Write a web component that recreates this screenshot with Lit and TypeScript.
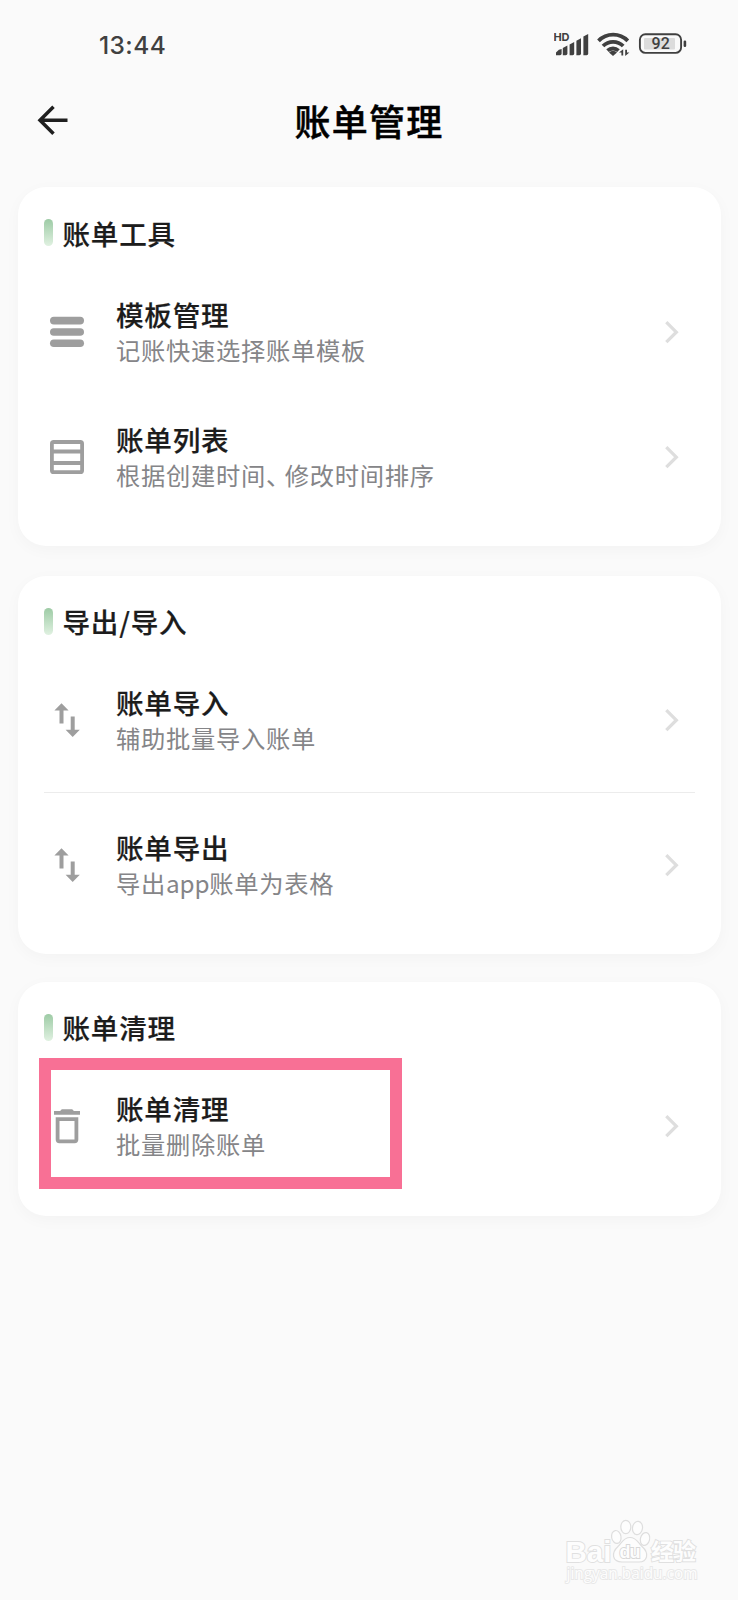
import { LitElement, html, css, svg, nothing } from "lit";
import { customElement, property } from "lit/decorators.js";

type IconName = "menu" | "list" | "swap" | "trash";

interface Row {
  icon: IconName;
  title: string;
  note: string;
  marked?: boolean;
}

interface Section {
  title: string;
  rows: Row[];
  divided?: boolean;
}

const SECTIONS: Section[] = [
  {
    title: "账单工具",
    rows: [
      { icon: "menu", title: "模板管理", note: "记账快速选择账单模板" },
      { icon: "list", title: "账单列表", note: "根据创建时间、修改时间排序" },
    ],
  },
  {
    title: "导出/导入",
    divided: true,
    rows: [
      { icon: "swap", title: "账单导入", note: "辅助批量导入账单" },
      { icon: "swap", title: "账单导出", note: "导出app账单为表格" },
    ],
  },
  {
    title: "账单清理",
    rows: [{ icon: "trash", title: "账单清理", note: "批量删除账单", marked: true }],
  },
];

const ICONS = {
  menu: svg`<g fill="#9e9e9e"><rect x="3" y="4.7" width="34" height="7.8" rx="3.9"/><rect x="3" y="16.2" width="34" height="7.6" rx="3.8"/><rect x="3" y="27.5" width="34" height="7.6" rx="3.8"/></g>`,
  list: svg`<g fill="none" stroke="#9e9e9e" stroke-width="3.8"><rect x="4.9" y="5" width="30.2" height="30.2" rx="1.8"/><path d="M5 14.5h30M5 26h30"/></g>`,
  swap: svg`<path fill="#9e9e9e" d="M14.5 3.2 21.6 10.4H16.5V23.6H12.5V10.4H7.4ZM25.7 37 18.6 29.8H23.7V16.6H27.7V29.8H32.8Z"/>`,
  trash: svg`<path fill="#9e9e9e" fill-rule="evenodd" d="M14.8 3.3h10.4l1.7 1.7H33V8.7H7V5h6.1zM8.7 11.3H31.3V33.5a3.7 3.7 0 0 1-3.7 3.7H12.4a3.7 3.7 0 0 1-3.7-3.7zM12.5 14.9V33.5h15V14.9z"/>`,
};

@customElement("status-bar")
class StatusBar extends LitElement {
  static styles = css`
    :host {
      display: flex;
      justify-content: space-between;
      align-items: center;
      height: 88px;
      padding: 1px 50px 0 99px;
      box-sizing: border-box;
      color: #404040;
    }
    .time {
      font: 500 24.5px/30px Inter, "Noto Sans", sans-serif;
      letter-spacing: 0.4px;
    }
    .hd {
      font: 700 11px Inter, "Noto Sans", sans-serif;
    }
    .level {
      font: 500 16px Roboto, "Noto Sans", sans-serif;
    }
  `;
  render() {
    return html`
      <span class="time">13:44</span>
      <svg width="134" height="30" viewBox="0 0 134 30" fill="#404040">
        <text class="hd" x="-0.6" y="11.4" textLength="16">HD</text>
        <path d="M2 25.2v-2.8q3-3.400 5.600-3.400v4.600q0 1.600-1.600 1.600z"/>
        <path d="M8.800 25.200v-7.200l4.600-2.500v8.100q0 1.600-1.600 1.600z"/>
        <path d="M15.600 25.200v-10.700l4.600-2.500v11.600q0 1.600-1.600 1.600z"/>
        <path d="M22.400 25.200v-14.400l4.600-2.500v15.300q0 1.600-1.600 1.600z"/>
        <path d="M29.400 25.200v-18.700l4.800-2.500v19.600q0 1.600-1.600 1.600z"/>
        <g fill="none" stroke="#404040" stroke-width="3.800">
          <path d="M44.500 10.800a20.500 20.500 0 0 1 29.300 0"/>
          <path d="M49 16a14.300 14.300 0 0 1 20.200 0"/>
          <path d="M53.500 20.600a8.300 8.300 0 0 1 11 0"/>
        </g>
        <path d="M59 20.700q2.300 0 4 1.700l-4 3.600-4-3.600q1.700-1.700 4-1.700z"/>
        <path d="M69.200 19.200v6.200h-1.800v-2.800h-2.400zM71.200 26v-6.200h1.800v2.800h2.400z"/>
        <rect x="85.900" y="4.300" width="41.200" height="18.600" rx="5.500" fill="none" stroke="#404040" stroke-width="1.900"/>
        <rect x="90" y="8" width="31" height="11.500" rx="1" fill="#dcdcdc"/>
        <rect x="129.600" y="10.500" width="2.600" height="6.500" rx="1.200"/>
        <text class="level" x="97.600" y="19.400">92</text>
      </svg>
    `;
  }
}

@customElement("bill-row")
class BillRow extends LitElement {
  @property({ attribute: false }) row!: Row;
  static styles = css`
    :host {
      display: block;
    }
    .row {
      display: grid;
      grid-template-columns: 40px 1fr 40px;
      column-gap: 29px;
      align-items: center;
      height: 125px;
      padding: 0 29px 0 29.500px;
      position: relative;
    }
    .icon,
    .go {
      display: block;
    }
    .title {
      font-size: 27.600px;
      line-height: 36px;
      font-weight: 500;
      letter-spacing: 0.750px;
      color: #1c1c1c;
      -webkit-text-stroke: 0.200px #1c1c1c;
    }
    .note {
      font-size: 24.300px;
      line-height: 36px;
      letter-spacing: 0.700px;
      color: #858588;
    }
    .half {
      letter-spacing: -5.500px;
    }
    .latin {
      letter-spacing: -0.150px;
    }
    .mark {
      position: absolute;
      left: 21.500px;
      top: -5.200px;
      width: 363px;
      height: 131px;
      box-sizing: border-box;
      border: 12px solid #f87095;
    }
  `;
  private renderNote(note: string) {
    return note
      .split(/(、|[a-z]+)/)
      .map((part) =>
        part === "、"
          ? html`<span class="half">、</span>`
          : /^[a-z]+$/.test(part)
            ? html`<span class="latin">${part}</span>`
            : part
      );
  }
  render() {
    const { icon, title, note, marked } = this.row;
    return html`<div class="row">
      <svg class="icon" width="40" height="40" viewBox="0 0 40 40">${ICONS[icon]}</svg>
      <div>
        <div class="title">${title}</div>
        <div class="note">${this.renderNote(note)}</div>
      </div>
      <svg class="go" width="40" height="40" viewBox="0 0 40 40">
        <path d="M14.300 10.200 24.300 20.200 14.300 30.200" fill="none" stroke="#dedede" stroke-width="3.300"/>
      </svg>
      ${marked ? html`<div class="mark"></div>` : nothing}
    </div>`;
  }
}

@customElement("site-watermark")
class SiteWatermark extends LitElement {
  static styles = css`
    :host {
      display: block;
    }
    .big,
    .cn,
    .du,
    .url {
      stroke: #e0e0e0;
      fill: #fdfdfd;
      paint-order: stroke;
      stroke-width: 1.800px;
    }
    .big {
      font: 700 29px "Liberation Sans", sans-serif;
    }
    .du {
      font: 700 18px "Liberation Sans", sans-serif;
      stroke: #d8d8d8;
    }
    .cn {
      font: 700 23px "Noto Sans CJK SC", sans-serif;
    }
    .url {
      font: 400 15.500px "Open Sans", sans-serif;
      stroke: #e8e8e8;
    }
  `;
  render() {
    return html`<svg width="150" height="74" viewBox="0 0 150 74">
      <text class="big" x="5.500" y="44.500" textLength="46" lengthAdjust="spacingAndGlyphs">Bai</text>
      <g fill="#fdfdfd" stroke="#dedede" stroke-width="1.200">
        <ellipse cx="56.300" cy="20" rx="4.700" ry="6.500" transform="rotate(-10 56 20)"/>
        <ellipse cx="65.800" cy="10" rx="5" ry="6.700"/>
        <ellipse cx="77.500" cy="11" rx="5" ry="6.700" transform="rotate(8 77.500 11)"/>
        <ellipse cx="85" cy="22" rx="4.600" ry="6.500" transform="rotate(14 85 22)"/>
        <path d="M70 20.500c7 0 8 5.500 12 9 8 7 5 15.500-3 15.500H62c-10 0-11-9-4-15.500 4-3.500 5-9 12-9z"/>
      </g>
      <text class="du" x="59.500" y="41" textLength="21">du</text>
      <text class="cn" x="91" y="43" textLength="45">经验</text>
      <text class="url" x="6.500" y="62" textLength="131" lengthAdjust="spacingAndGlyphs">jingyan.baidu.com</text>
    </svg>`;
  }
}

@customElement("app-root")
class AppRoot extends LitElement {
  static styles = css`
    :host {
      display: block;
      position: relative;
      box-sizing: border-box;
      height: 1600px;
      overflow: hidden;
      background: #fafafa;
      font-family: "Noto Sans CJK SC", sans-serif;
    }
    .bar {
      display: grid;
      grid-template-columns: 40px 1fr 40px;
      align-items: center;
      height: 66px;
      padding: 0 33px;
      margin-bottom: 33.300px;
    }
    .heading {
      margin: -2px 0 0;
      text-align: center;
      font-size: 36px;
      line-height: 50px;
      font-weight: 500;
      letter-spacing: 1.200px;
      color: #000;
      -webkit-text-stroke: 0.500px #000;
    }
    .sections {
      display: grid;
      gap: 27.400px;
      padding: 0 17.500px;
    }
    .card {
      background: #fff;
      border-radius: 28px;
      padding: 25px 0 27px;
      box-shadow: 0 4px 16px rgba(0, 0, 0, 0.03);
    }
    .divided {
      margin-top: 2px;
    }
    .head {
      display: flex;
      gap: 9.500px;
      height: 57px;
      padding-left: 26.500px;
    }
    .tick {
      width: 9px;
      height: 27px;
      margin-top: 7px;
      border-radius: 4.500px;
      background: linear-gradient(#9dcba5, #e0f1e1);
    }
    .name {
      margin: -1.500px 0 0;
      font-size: 27.600px;
      line-height: 44px;
      font-weight: 500;
      letter-spacing: 0.750px;
      color: #1c1c1c;
      -webkit-text-stroke: 0.200px #1c1c1c;
    }
    .rule {
      height: 1px;
      margin: 9.300px 26px;
      background: #ececec;
    }
    .watermark {
      position: absolute;
      left: 560px;
      top: 1517px;
    }
  `;
  render() {
    return html`
      <status-bar></status-bar>
      <header class="bar">
        <svg width="40" height="40" viewBox="0 0 40 40">
          <path d="M34.500 19.300H7.500M20.500 5.800 7 19.300 20.500 32.800" fill="none" stroke="#1f1f1f" stroke-width="3.500"/>
        </svg>
        <h1 class="heading">账单管理</h1>
      </header>
      <main class="sections">
        ${SECTIONS.map(
          (s) => html`<section class="card ${s.divided ? "divided" : ""}">
            <div class="head"><i class="tick"></i><h2 class="name">${s.title}</h2></div>
            ${s.rows.map(
              (r, i) => html`${s.divided && i ? html`<div class="rule"></div>` : nothing}<bill-row .row=${r}></bill-row>`
            )}
          </section>`
        )}
      </main>
      <site-watermark class="watermark"></site-watermark>
    `;
  }
}
